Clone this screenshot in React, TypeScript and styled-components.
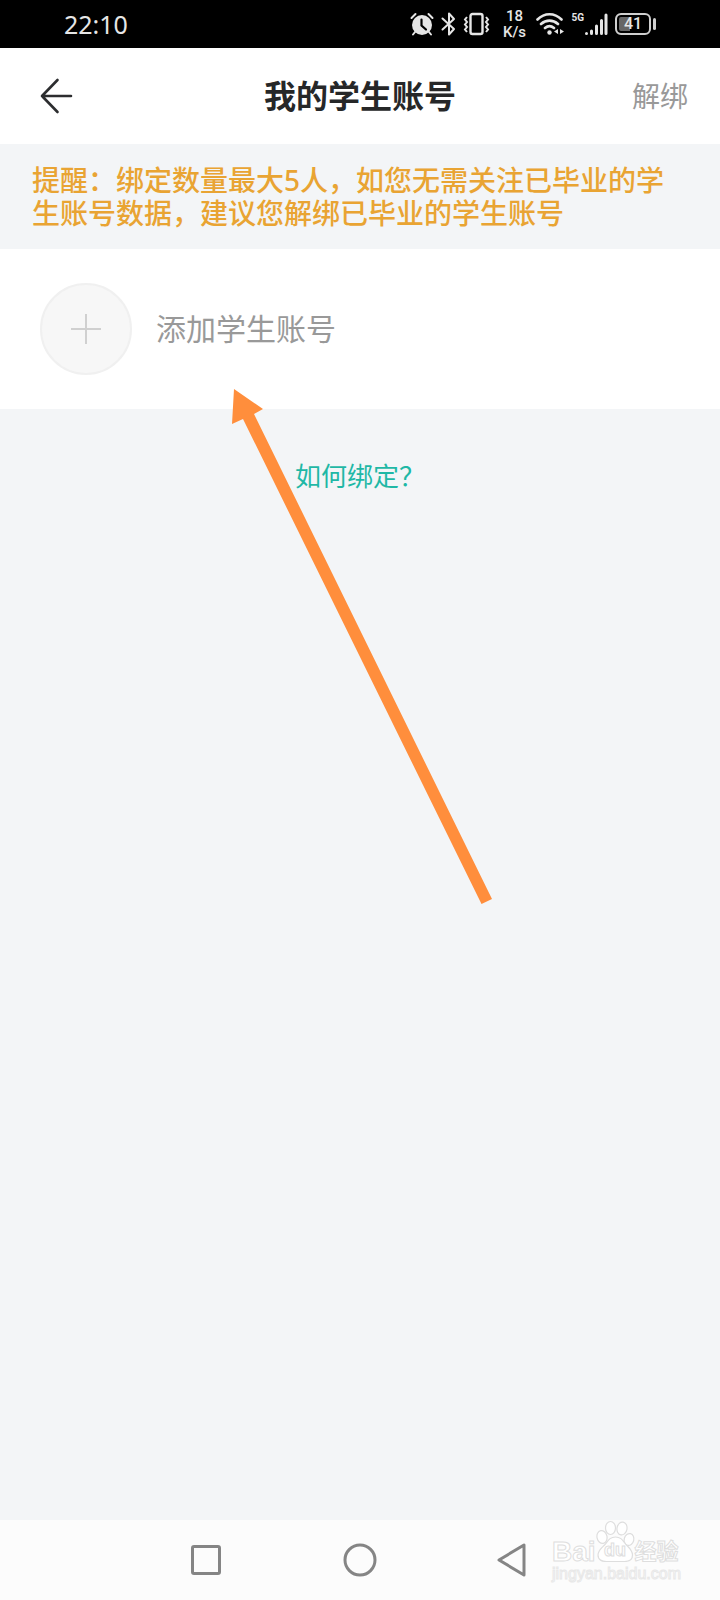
import React from "react";
import styled, { createGlobalStyle } from "styled-components";

const GlobalStyle = createGlobalStyle`
  *, *::before, *::after { box-sizing: border-box; }
  body {
    margin: 0;
    background: #f3f5f7;
    font-family: "Noto Sans", "Noto Sans CJK SC", sans-serif;
  }
  button {
    border: 0;
    padding: 0;
    background: none;
    font-family: inherit;
    cursor: pointer;
  }
  svg { display: block; flex: none; }
`;

const Screen = styled.div`
  position: relative;
  min-height: 100vh;
  display: flex;
  flex-direction: column;
`;

const StatusBar = styled.div`
  height: 48px;
  padding: 0 64px;
  display: flex;
  align-items: center;
  justify-content: space-between;
  background: #000;
  color: #e6e6e6;
`;

const Clock = styled.time`
  font-size: 25px;
  line-height: 32px;
`;

const StatusIcons = styled.div`
  display: flex;
  align-items: center;
  gap: 7px;
`;

const NetSpeed = styled.div`
  width: 26px;
  margin: 0 2px 0 4px;
  display: flex;
  flex-direction: column;
  align-items: center;
  font-family: Roboto, sans-serif;
  font-size: 15px;
  line-height: 16px;
  font-weight: 500;
`;

const Signal = styled.div`
  display: flex;
  align-items: flex-start;
`;

const NetworkType = styled.span`
  font-family: Roboto, sans-serif;
  font-size: 10px;
  line-height: 12px;
  font-weight: 700;
`;

const BatteryFrame = styled.div`
  position: relative;
  width: 36px;
  height: 22px;
  margin-right: 5px;
  border: 2px solid #cfcfcf;
  border-radius: 6px;
  background: linear-gradient(90deg, #666 41%, #000 41%);
  box-shadow: inset 0 0 0 2px #000;
  font-family: Roboto, sans-serif;
  font-size: 16px;
  line-height: 18px;
  font-weight: 500;
  text-align: center;

  &::after {
    content: "";
    position: absolute;
    right: -7px;
    top: 3px;
    width: 3px;
    height: 12px;
    border-radius: 2px;
    background: #cfcfcf;
  }
`;

const Header = styled.header`
  height: 96px;
  padding: 0 32px;
  display: grid;
  grid-template-columns: 1fr auto 1fr;
  align-items: center;
  background: #fff;
`;

const Title = styled.h1`
  margin: 0;
  font-size: 32px;
  line-height: 40px;
  font-weight: 700;
  color: #262728;
`;

const BackButton = styled.button`
  justify-self: start;
  padding-left: 8px;
`;

const UnbindButton = styled.button`
  justify-self: end;
  font-size: 28px;
  line-height: 40px;
  color: #999;
`;

const Notice = styled.p`
  margin: 0;
  padding: 20px 32px 19px;
  font-size: 28px;
  line-height: 33px;
  font-weight: 500;
  color: #e9a433;
`;

const AddRow = styled.button`
  width: 100%;
  height: 160px;
  padding: 0 40px;
  display: flex;
  align-items: center;
  gap: 24px;
  background: #fff;
  font-size: 30px;
  line-height: 40px;
  color: #999;
`;

const AddCircle = styled.span`
  width: 92px;
  height: 92px;
  display: grid;
  place-items: center;
  border: 2px solid #f0f0f0;
  border-radius: 50%;
  background: #f7f7f7;
`;

const Help = styled.main`
  flex: 1;
  padding-top: 49px;
  text-align: center;
`;

const HelpLink = styled.a`
  font-size: 26px;
  line-height: 36px;
  color: #1fb8a6;
  text-decoration: none;
`;

const NavBar = styled.nav`
  height: 80px;
  display: flex;
  justify-content: center;
  background: #fcfcfc;
`;

const NavButton = styled.button`
  flex: 0 1 154px;
  display: grid;
  place-items: center;
`;

const Pointer = styled.svg`
  position: absolute;
  left: 230px;
  top: 388px;
  pointer-events: none;
`;

const Watermark = styled.div`
  position: absolute;
  right: 40px;
  bottom: 16px;
  width: 128px;
  font-family: "Liberation Sans", "Noto Sans CJK SC", sans-serif;
  color: #fff;
  -webkit-text-stroke: 1px #dedede;
  pointer-events: none;
`;

const Brand = styled.div`
  height: 42px;
  display: flex;
  align-items: flex-end;
  font-size: 28px;
  line-height: 20px;
  font-weight: 700;
`;

const BrandCn = styled.span`
  font-size: 22px;
`;

const Paw = styled.span`
  position: relative;
  width: 39px;
  height: 42px;
  flex: none;
`;

const PawText = styled.span`
  position: absolute;
  inset: auto 0 2px;
  text-align: center;
  font-size: 18px;
  line-height: 20px;
`;

const Site = styled.div`
  margin-top: 2px;
  font-size: 16px;
  line-height: 20px;
  -webkit-text-stroke: 1px #e8e8e8;
`;

const AlarmIcon = () => (
  <svg width="24" height="24" viewBox="0 0 24 24" fill="none" strokeLinecap="round">
    <circle cx="12" cy="13" r="10" fill="#e6e6e6" />
    <path d="M1.5 6 5.5 2M22.5 6l-4-4M5 20l-2 2.500M19 20l2 2.500" stroke="#e6e6e6" strokeWidth="2" />
    <path d="M11.500 7.500v6l4.500 4" stroke="#000" strokeWidth="2.200" />
  </svg>
);

const BluetoothIcon = () => (
  <svg width="15" height="24" viewBox="0 0 15 24" fill="none" stroke="#e6e6e6" strokeWidth="2" strokeLinejoin="round" strokeLinecap="round">
    <path d="M1.500 6.500 13 17l-5 5.500V1.500L13 7 1.500 17.500" />
  </svg>
);

const VibrateIcon = () => (
  <svg width="27" height="24" viewBox="0 0 27 24" fill="none" stroke="#e6e6e6" strokeWidth="2">
    <rect x="7.500" y="2" width="12" height="20" rx="2" strokeWidth="2.400" />
    <path d="M4 5 2 7.500 4 10 2 12.500 4 15 2 17.500 4 20M23 5l2 2.500L23 10l2 2.500L23 15l2 2.500L23 20" />
  </svg>
);

const WifiIcon = () => (
  <svg width="28" height="24" viewBox="0 0 28 24" fill="none" stroke="#e6e6e6" strokeWidth="2.600" strokeLinecap="round">
    <path d="M1.500 7.500C8.500 .5 18.500 .5 25.500 7.500M5 12c5-4.500 12-4.500 17 0M9 16c3-2.500 6-2.500 9 0" />
    <circle cx="13.500" cy="20.500" r="2.200" fill="#e6e6e6" stroke="none" />
    <path d="M22 17v5l-4-2.500zM24 17v5l4-2.500z" fill="#e6e6e6" stroke="none" />
  </svg>
);

const SignalBars = () => (
  <svg width="24" height="24" viewBox="0 0 24 24" stroke="#e6e6e6" strokeWidth="3" strokeLinecap="round">
    <path d="M2.500 21.500v0M7.500 19v2.500M12.500 14v7.500M17.500 8.500v13M22 3v18.500" />
  </svg>
);

const BackArrow = () => (
  <svg width="34" height="36" viewBox="0 0 34 36" fill="none" stroke="#2c2d2f" strokeWidth="2.600" strokeLinecap="round" strokeLinejoin="round">
    <path d="M17.500 2 2 18l15.500 16M2 18h29" />
  </svg>
);

const PawShape = () => (
  <svg width="39" height="42" viewBox="0 0 39 42" fill="#fff" stroke="#dedede" strokeWidth="1.200">
    <ellipse cx="6" cy="17" rx="5" ry="6.500" transform="rotate(-12 6 17)" />
    <ellipse cx="14.500" cy="8" rx="5" ry="6.500" />
    <ellipse cx="26" cy="8.500" rx="5" ry="6.500" transform="rotate(10 26 8.500)" />
    <ellipse cx="33" cy="19.500" rx="4.800" ry="6" transform="rotate(15 33 19.500)" />
    <path d="M19.500 17c6 0 7.500 4 11 8 3.500 3.500 6 5.500 6 10 0 5-3.500 6.500-8 6.500h-18c-4.500 0-8.500-1.500-8.500-6.500 0-4.500 3-6.500 6.500-10 3.500-4 5-8 11-8z" />
  </svg>
);

export default function App() {
  return (
    <>
      <GlobalStyle />
      <Screen>
        <StatusBar>
          <Clock>22:10</Clock>
          <StatusIcons>
            <AlarmIcon />
            <BluetoothIcon />
            <VibrateIcon />
            <NetSpeed>
              <span>18</span>
              <span>K/s</span>
            </NetSpeed>
            <WifiIcon />
            <Signal>
              <NetworkType>5G</NetworkType>
              <SignalBars />
            </Signal>
            <BatteryFrame>41</BatteryFrame>
          </StatusIcons>
        </StatusBar>

        <Header>
          <BackButton type="button" aria-label="返回">
            <BackArrow />
          </BackButton>
          <Title>我的学生账号</Title>
          <UnbindButton type="button">解绑</UnbindButton>
        </Header>

        <Notice>
          提醒：绑定数量最大5人，如您无需关注已毕业的学生账号数据，建议您解绑已毕业的学生账号
        </Notice>

        <AddRow type="button">
          <AddCircle>
            <svg width="30" height="30" viewBox="0 0 30 30" stroke="#d0d0d0" strokeWidth="2">
              <path d="M15 0v30M0 15h30" />
            </svg>
          </AddCircle>
          添加学生账号
        </AddRow>

        <Help>
          <HelpLink href="#help">如何绑定？</HelpLink>
        </Help>

        <NavBar>
          <NavButton type="button" aria-label="最近任务">
            <svg width="34" height="34" viewBox="0 0 34 34" fill="none" stroke="#858585" strokeWidth="3">
              <rect x="3.500" y="3.500" width="27" height="27" rx="1.500" />
            </svg>
          </NavButton>
          <NavButton type="button" aria-label="主屏幕">
            <svg width="34" height="34" viewBox="0 0 34 34" fill="none" stroke="#858585" strokeWidth="3">
              <circle cx="17" cy="17" r="15" />
            </svg>
          </NavButton>
          <NavButton type="button" aria-label="后退">
            <svg width="34" height="34" viewBox="0 0 34 34" fill="none" stroke="#858585" strokeWidth="3" strokeLinejoin="round">
              <path d="M27 2v30L2 17z" />
            </svg>
          </NavButton>
        </NavBar>

        <Pointer width="264" height="518" viewBox="0 0 264 518" fill="#ff8e3c" aria-hidden="true">
          <path d="M4 1 33 21l-9 5 238 485-10.500 5L13 31 2 36z" />
        </Pointer>

        <Watermark>
          <Brand>
            Bai
            <Paw>
              <PawShape />
              <PawText>du</PawText>
            </Paw>
            <BrandCn>经验</BrandCn>
          </Brand>
          <Site>jingyan.baidu.com</Site>
        </Watermark>
      </Screen>
    </>
  );
}
